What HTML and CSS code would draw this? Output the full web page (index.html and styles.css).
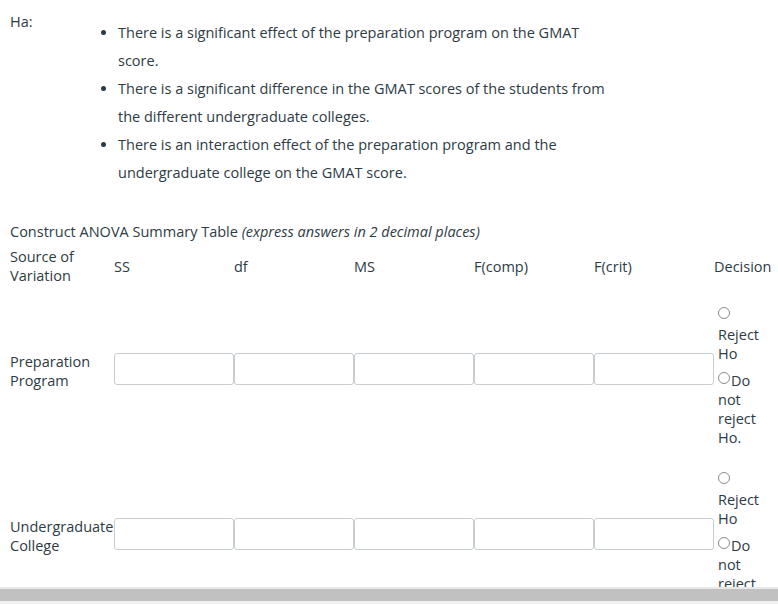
FILE: index.html
```html
<!DOCTYPE html>
<html lang="en">
<head>
<meta charset="utf-8">
<title>ANOVA Summary Table</title>
<link rel="stylesheet" href="styles.css">
</head>
<body>
<div class="page">
  <div class="ha">
    <div class="ha-label">Ha:</div>
    <ul class="ha-list">
      <li>There is a significant effect of the preparation program on the GMAT score.</li>
      <li>There is a significant difference in the GMAT scores of the students from the different undergraduate colleges.</li>
      <li>There is an interaction effect of the preparation program and the undergraduate college on the GMAT score.</li>
    </ul>
  </div>

  <p class="title">Construct ANOVA Summary Table <em>(express answers in 2 decimal places)</em></p>

  <div class="anova">
    <div class="row row-head">
      <div class="cell">Source of Variation</div>
      <div class="cell">SS</div>
      <div class="cell">df</div>
      <div class="cell">MS</div>
      <div class="cell">F(comp)</div>
      <div class="cell">F(crit)</div>
      <div class="cell">Decision</div>
    </div>

    <div class="row">
      <div class="cell src">Preparation Program</div>
      <div class="cell"><input class="box" type="text" aria-label="Preparation Program SS"></div>
      <div class="cell"><input class="box" type="text" aria-label="Preparation Program df"></div>
      <div class="cell"><input class="box" type="text" aria-label="Preparation Program MS"></div>
      <div class="cell"><input class="box" type="text" aria-label="Preparation Program F(comp)"></div>
      <div class="cell"><input class="box" type="text" aria-label="Preparation Program F(crit)"></div>
      <div class="cell decision">
        <label class="opt"><input class="radio" type="radio" name="d1"> Reject Ho</label>
        <label class="opt opt-second"><input class="radio" type="radio" name="d1">Do not reject Ho.</label>
      </div>
    </div>

    <div class="row">
      <div class="cell src">Undergraduate College</div>
      <div class="cell"><input class="box" type="text" aria-label="Undergraduate College SS"></div>
      <div class="cell"><input class="box" type="text" aria-label="Undergraduate College df"></div>
      <div class="cell"><input class="box" type="text" aria-label="Undergraduate College MS"></div>
      <div class="cell"><input class="box" type="text" aria-label="Undergraduate College F(comp)"></div>
      <div class="cell"><input class="box" type="text" aria-label="Undergraduate College F(crit)"></div>
      <div class="cell decision">
        <label class="opt"><input class="radio" type="radio" name="d2"> Reject Ho</label>
        <label class="opt opt-second"><input class="radio" type="radio" name="d2">Do not reject Ho.</label>
      </div>
    </div>
  </div>
</div>
<div class="hscroll"><div class="hscroll-thumb"></div></div>
</body>
</html>
```
FILE: styles.css
```css
html, body {
  margin: 0;
  padding: 0;
  background: #ffffff;
}

body {
  font-family: "Open Sans", "Liberation Sans", sans-serif;
  font-size: 14.5px;
  line-height: 19px;
  color: #2d3b45;
  overflow: hidden;
}

.page {
  padding-left: 10px;
}

.ha {
  display: flex;
  align-items: flex-start;
}

.ha-label {
  width: 68px;
  padding-top: 12px;
}

.ha-list {
  margin: 19px 0 0;
  padding-left: 40px;
  width: 494px;
  line-height: 28px;
}

.title {
  margin: 35px 0 0;
}

.title em {
  font-style: italic;
}

.anova {
  margin-top: 6px;
}

.row {
  display: grid;
  grid-template-columns: 104px repeat(5, 120px) 58px;
  align-items: center;
  margin-bottom: 8px;
}

.row-head {
  margin-bottom: 5px;
}

.src {
  padding-top: 4px;
}

.box {
  display: block;
  width: 120px;
  height: 32px;
  box-sizing: border-box;
  margin: 0;
  border: 1px solid #c7cdd1;
  border-radius: 3px;
  background: #ffffff;
  font: inherit;
}

.decision {
  padding-top: 16px;
}

.opt {
  display: block;
  padding-left: 4px;
}

.opt-second {
  margin-top: 8px;
}

.radio {
  appearance: none;
  -webkit-appearance: none;
  display: inline-block;
  width: 12px;
  height: 12px;
  box-sizing: border-box;
  margin: 0 1px 2px 0;
  border: 1px solid #8c8c8c;
  border-radius: 50%;
  background: #ffffff;
  vertical-align: baseline;
}

.hscroll {
  position: fixed;
  left: 0;
  right: 0;
  bottom: 0;
  height: 15px;
  background: #f1f1f1;
  border-top: 2px solid #e8e8e8;
}

.hscroll-thumb {
  height: 12px;
  background: #c1c1c1;
}
```
